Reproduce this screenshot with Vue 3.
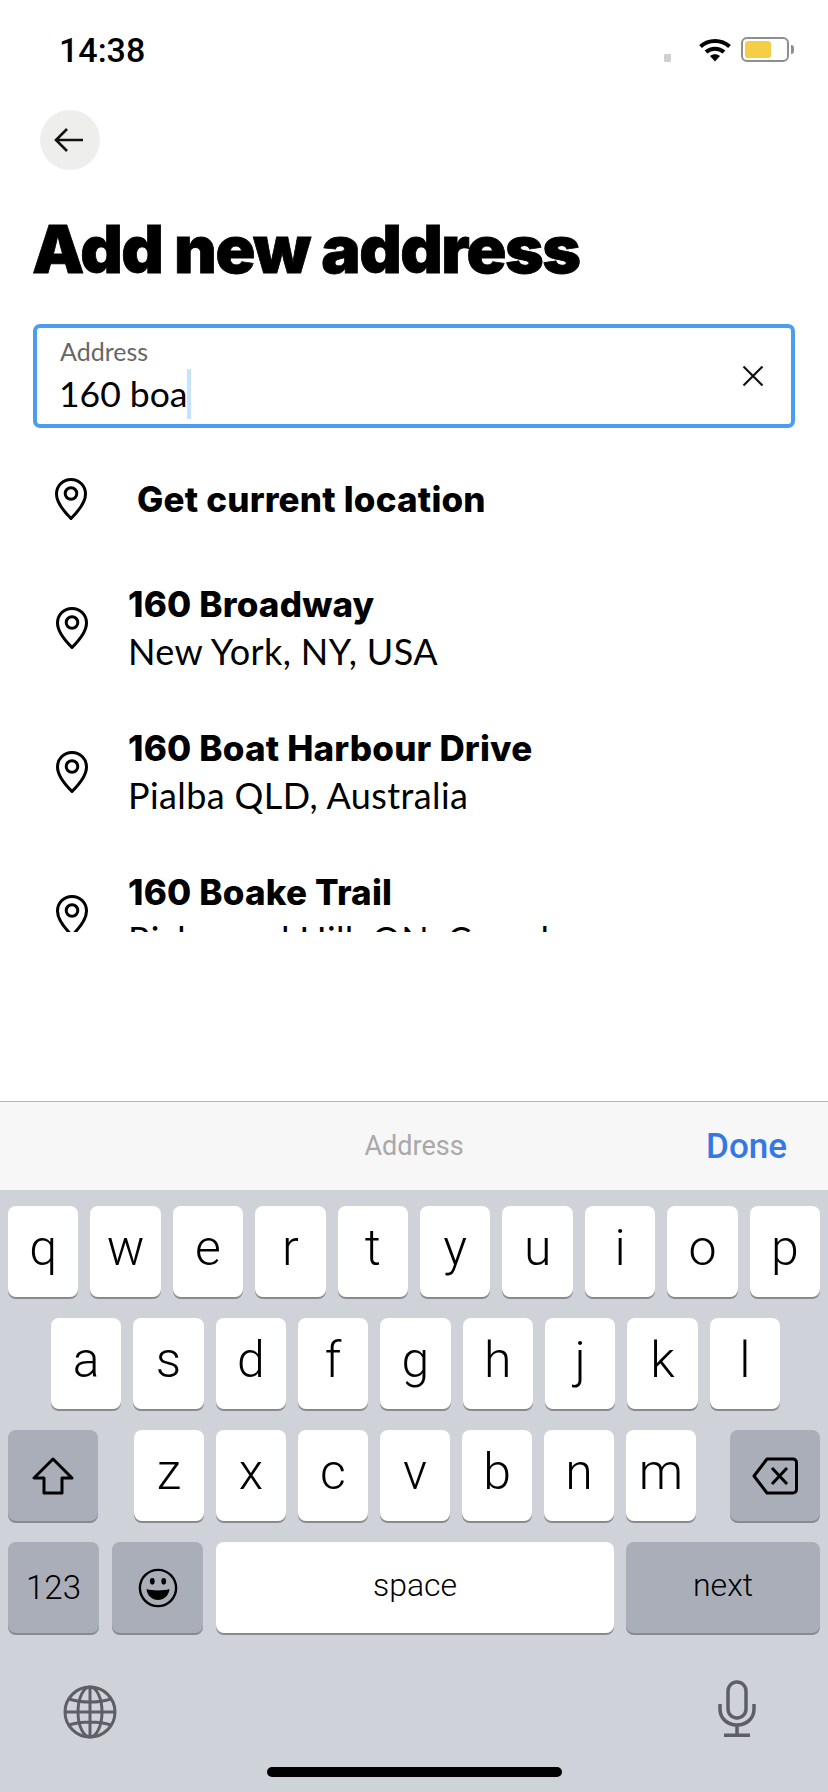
<script setup>
const suggestions = [
  { title: "160 Broadway", sub: "New York, NY, USA" },
  { title: "160 Boat Harbour Drive", sub: "Pialba QLD, Australia" },
  { title: "160 Boake Trail", sub: "Richmond Hill, ON, Canada" },
];
const rowOne = "qwertyuiop".split("");
const rowTwo = "asdfghjkl".split("");
const rowThree = "zxcvbnm".split("");
</script>

<template>
  <div class="screen">
    <div class="status">
      <span class="time">14:38</span>
      <div class="status-icons">
        <span class="signal-dot"></span>
        <svg class="wifi" width="32" height="25" viewBox="0 0 32 25">
          <path d="M1.500 9.500C9.500 2 22.500 2 30.500 9.500" fill="none" stroke="#000" stroke-width="4" />
          <path d="M7 15C12 10.500 20 10.500 25 15" fill="none" stroke="#000" stroke-width="4" />
          <path d="M11 19L16 24.500L21 19C18 16.500 14 16.500 11 19Z" fill="#000" />
        </svg>
        <div class="battery"><div class="battery-fill"></div></div>
        <span class="battery-nub"></span>
      </div>
    </div>

    <div class="back-wrap">
      <button class="back">
        <svg width="32" height="26" viewBox="0 0 32 26">
          <path d="M30 13H3M14 2L3 13L14 24" fill="none" stroke="#111" stroke-width="2.600" />
        </svg>
      </button>
    </div>

    <h1 class="title">Add new address</h1>

    <div class="field">
      <div class="field-text">
        <div class="field-label">Address</div>
        <div class="field-value">160 boa<span class="caret"></span></div>
      </div>
      <svg class="clear" width="22" height="22" viewBox="0 0 22 22">
        <path d="M1.500 1.500L20.500 20.500M20.500 1.500L1.500 20.500" stroke="#111" stroke-width="2.200" />
      </svg>
    </div>

    <div class="list">
      <div class="current">
        <svg class="pin" width="34" height="42" viewBox="0 0 34 42">
          <path d="M17 1.500C8.500 1.500 2.500 8 2.500 16C2.500 24.500 10.500 34 17 40.500C23.500 34 31.500 24.500 31.500 16C31.500 8 25.500 1.500 17 1.500Z" fill="none" stroke="#000" stroke-width="3" />
          <circle cx="17" cy="15.500" r="5.800" fill="none" stroke="#000" stroke-width="3" />
        </svg>
        <span class="current-text">Get current location</span>
      </div>
      <div v-for="s in suggestions" :key="s.title" class="suggestion">
        <svg class="pin" width="34" height="42" viewBox="0 0 34 42">
          <path d="M17 1.500C8.500 1.500 2.500 8 2.500 16C2.500 24.500 10.500 34 17 40.500C23.500 34 31.500 24.500 31.500 16C31.500 8 25.500 1.500 17 1.500Z" fill="none" stroke="#000" stroke-width="3" />
          <circle cx="17" cy="15.500" r="5.800" fill="none" stroke="#000" stroke-width="3" />
        </svg>
        <div class="suggestion-text">
          <div class="s-title">{{ s.title }}</div>
          <div class="s-sub">{{ s.sub }}</div>
        </div>
      </div>
    </div>

    <div class="toolbar">
      <span></span>
      <span class="toolbar-label">Address</span>
      <span class="done">Done</span>
    </div>

    <div class="keyboard">
      <div class="key-row">
        <div v-for="k in rowOne" :key="k" class="key letter">{{ k }}</div>
      </div>
      <div class="key-row row-two">
        <div v-for="k in rowTwo" :key="k" class="key letter">{{ k }}</div>
      </div>
      <div class="key-row row-three">
        <div class="key dark wide">
          <svg width="44" height="38" viewBox="0 0 44 38">
            <path d="M22 2L3 21H13V36H31V21H41Z" fill="none" stroke="#000" stroke-width="3" stroke-linejoin="round" />
          </svg>
        </div>
        <div class="letters">
          <div v-for="k in rowThree" :key="k" class="key letter">{{ k }}</div>
        </div>
        <div class="key dark wide">
          <svg width="46" height="38" viewBox="0 0 46 38">
            <path d="M15 2H41C43 2 44.500 3.500 44.500 5.500V32.500C44.500 34.500 43 36 41 36H15L2 19Z" fill="none" stroke="#000" stroke-width="3" stroke-linejoin="round" />
            <path d="M20 11L35 27M35 11L20 27" stroke="#000" stroke-width="3" />
          </svg>
        </div>
      </div>
      <div class="key-row row-four">
        <div class="key dark fn">123</div>
        <div class="key dark fn">
          <svg width="40" height="40" viewBox="0 0 42 42">
            <circle cx="21" cy="21" r="19" fill="none" stroke="#000" stroke-width="2.500" />
            <ellipse cx="15" cy="14" rx="2.500" ry="3.500" fill="#000" />
            <ellipse cx="27" cy="14" rx="2.500" ry="3.500" fill="#000" />
            <path d="M9 22C15 24 27 24 33 22C32.500 29 27 33.500 21 33.500C15 33.500 9.500 29 9 22Z" fill="#000" />
          </svg>
        </div>
        <div class="key space">space</div>
        <div class="key dark next">next</div>
      </div>
      <div class="kb-bottom">
        <svg class="globe" width="54" height="54" viewBox="0 0 54 54">
          <g fill="none" stroke="#5d5f64" stroke-width="3">
            <circle cx="27" cy="27" r="25" />
            <ellipse cx="27" cy="27" rx="12" ry="25" />
            <path d="M27 2V52M2 27H52M6 14C18 18 36 18 48 14M6 40C18 36 36 36 48 40" />
          </g>
        </svg>
        <svg class="mic" width="38" height="58" viewBox="0 0 38 58">
          <g fill="none" stroke="#5d5f64" stroke-width="3.500">
            <rect x="10" y="2" width="18" height="36" rx="9" />
            <path d="M2 24V29C2 38 9 45 19 45C29 45 36 38 36 29V24M19 45V55" />
          </g>
          <path d="M6 53.500H32V57H6Z" fill="#5d5f64" />
        </svg>
      </div>
      <div class="home-bar"></div>
    </div>
  </div>
</template>

<style scoped>
.screen {
  width: 828px;
  height: 1792px;
  display: flex;
  flex-direction: column;
  overflow: hidden;
  background: #fff;
  color: #000;
  font-family: "Lato", "Liberation Sans", sans-serif;
}

.status {
  height: 110px;
  flex: none;
  display: flex;
  justify-content: space-between;
  align-items: flex-start;
  padding: 32px 34px 0 59px;
  box-sizing: border-box;
}

.time {
  font-family: "Roboto", sans-serif;
  font-size: 34px;
  font-weight: 500;
  line-height: 36px;
}

.status-icons {
  display: flex;
  align-items: flex-start;
  padding-top: 5px;
}

.signal-dot {
  width: 7px;
  height: 8px;
  margin: 17px 28px 0 0;
  background: #d0d0d0;
  border-radius: 1px;
}

.wifi {
  margin-right: 10px;
}

.battery {
  width: 48px;
  height: 25px;
  box-sizing: border-box;
  border: 2px solid #8e8e8e;
  border-radius: 6px;
  padding: 2px;
}

.battery-fill {
  width: 26px;
  height: 17px;
  background: #f5cd47;
  border-radius: 3px;
}

.battery-nub {
  width: 3px;
  height: 9px;
  margin: 8px 0 0 2px;
  background: #8e8e8e;
  border-radius: 0 3px 3px 0;
}

.back-wrap {
  padding-left: 40px;
  flex: none;
}

.back {
  display: flex;
  align-items: center;
  justify-content: center;
  width: 60px;
  height: 60px;
  border: none;
  padding: 0 2px 0 0;
  border-radius: 50%;
  background: #eeefec;
}

.title {
  margin: 41px 0 0 32px;
  flex: none;
  font-family: "Inter", sans-serif;
  font-size: 66px;
  font-weight: 900;
  line-height: 76px;
  letter-spacing: -1.500px;
  -webkit-text-stroke: 0.8px #000;
}

.field {
  flex: none;
  margin: 37px 33px 0;
  height: 104px;
  box-sizing: border-box;
  border: 4px solid #4a9eec;
  border-radius: 7px;
  display: flex;
  align-items: center;
  justify-content: space-between;
  padding: 0 27px 0 23px;
}

.field-label {
  font-size: 25px;
  line-height: 28px;
  color: #666;
}

.field-value {
  font-size: 35.500px;
  line-height: 42px;
  margin: 8px 0 0 -1px;
  display: flex;
  align-items: center;
}

.caret {
  width: 4px;
  height: 50px;
  margin: -8px 0 -8px -1px;
  background: #c5e3fb;
}

.list {
  height: 504px;
  flex: none;
  overflow: hidden;
}

.current {
  display: flex;
  align-items: center;
  height: 72px;
  margin-top: 35px;
  padding-left: 54px;
}

.current-text {
  margin-left: 49px;
  font-family: "Inter", sans-serif;
  font-size: 35px;
  font-weight: 800;
  letter-spacing: 0.200px;
}

.suggestion {
  display: flex;
  align-items: center;
  height: 144px;
  padding-left: 55px;
}

.current + .suggestion {
  margin-top: 21px;
}

.suggestion-text {
  margin-left: 39px;
}

.s-title {
  font-family: "Inter", sans-serif;
  font-size: 35px;
  font-weight: 800;
  letter-spacing: 0.200px;
  line-height: 46px;
}

.s-sub {
  font-size: 36px;
  line-height: 48px;
  letter-spacing: 0.400px;
}

.toolbar {
  flex: none;
  margin-top: 169px;
  height: 89px;
  box-sizing: border-box;
  border-top: 1px solid #b4b4b4;
  background: #f7f7f7;
  display: grid;
  grid-template-columns: 1fr auto 1fr;
  align-items: center;
  padding: 0 41px;
  font-family: "Roboto", sans-serif;
}

.toolbar-label {
  font-size: 27px;
  color: #a9a9a9;
}

.done {
  justify-self: end;
  font-size: 35px;
  font-weight: 500;
  color: #3478e5;
}

.keyboard {
  flex: 1;
  background: #d0d2d9;
  display: flex;
  flex-direction: column;
  padding-top: 16px;
  font-family: "Roboto", sans-serif;
}

.key-row {
  display: flex;
  gap: 12px;
  height: 91px;
  padding: 0 8px;
  margin-bottom: 21px;
}

.row-two {
  padding: 0 48px 0 51px;
}

.row-three {
  justify-content: space-between;
}

.letters {
  display: flex;
  gap: 12px;
  width: 562px;
  margin-left: 2px;
}

.key {
  flex: 1;
  display: flex;
  align-items: center;
  justify-content: center;
  background: #fff;
  border-radius: 8px;
  box-shadow: 0 2px 0 #88898d;
}

.letter {
  font-size: 50px;
  font-weight: 300;
  padding-bottom: 7px;
  box-sizing: border-box;
}

.dark {
  background: #aaaeb8;
}

.wide {
  flex: none;
  width: 90px;
}

.row-four {
  gap: 13px;
}

.row-four .fn {
  flex: none;
  width: 91px;
  font-size: 33px;
  font-weight: 300;
}

.space {
  flex: none;
  width: 398px;
  padding-bottom: 5px;
  box-sizing: border-box;
  font-size: 32px;
  font-weight: 300;
}

.next {
  flex: none;
  width: 194px;
  margin-left: -1px;
  padding-bottom: 5px;
  box-sizing: border-box;
  font-size: 32px;
  font-weight: 300;
}

.kb-bottom {
  display: flex;
  justify-content: space-between;
  align-items: flex-start;
  padding: 29px 72px 0 63px;
  height: 84px;
}

.globe {
  margin-top: 2px;
}

.mic {
  margin-top: -3px;
}

.home-bar {
  align-self: center;
  width: 295px;
  height: 10px;
  border-radius: 5px;
  background: #000;
  margin-left: 1px;
}
</style>
